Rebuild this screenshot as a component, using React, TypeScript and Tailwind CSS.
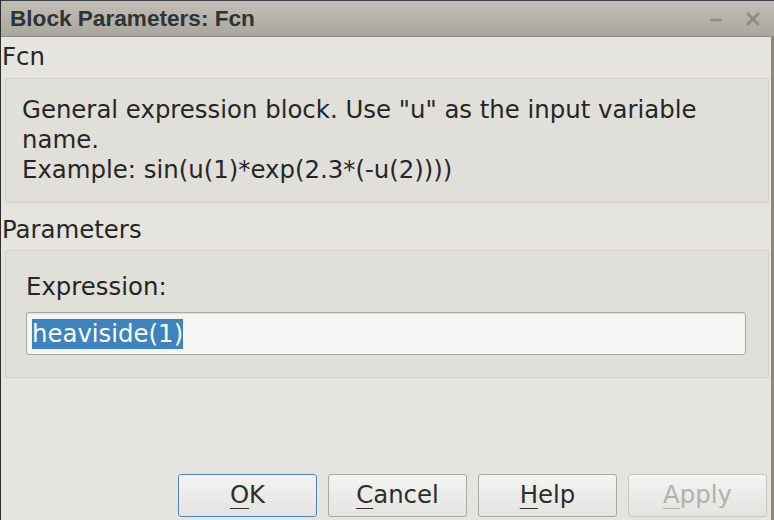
import React from "react";

const body = { fontFamily: '"DejaVu Sans", "Liberation Sans", sans-serif' };

function Btn({ mn, rest, primary, disabled }: { mn: string; rest: string; primary?: boolean; disabled?: boolean }) {
  return (
    <button
      className={
        "h-[43px] w-[139px] rounded-[3px] border bg-gradient-to-b from-[#f4f4f2] to-[#e4e3e0] text-[24.4px] leading-none " +
        (primary ? "border-[#4d86bd] " : disabled ? "border-[#c9c7c2] " : "border-[#aaa8a2] ") +
        (disabled ? "text-[#b3b1ab]" : "text-[#2e2e2e]")
      }
      style={body}
    >
      <span className="underline decoration-1 underline-offset-[5px]">{mn}</span>
      {rest}
    </button>
  );
}

export default function App() {
  return (
    <div className="w-[774px] h-[520px] flex flex-col bg-[#e6e4df] border-l border-[#2b2f34] overflow-hidden" style={body}>
      {/* title bar */}
      <div className="h-[37px] shrink-0 flex items-center justify-between border-t border-[#3a3e44] border-b border-b-[#8e8b84] bg-gradient-to-b from-[#c3bfb8] to-[#a9a69e] pl-[9px] pr-[14px] mr-[-1px]">
        <span className="text-[22.6px] font-bold text-[#2e3436]" style={{ fontFamily: '"Liberation Sans", Arial, sans-serif' }}>
          Block Parameters: Fcn
        </span>
        <div className="flex items-center gap-[22px] text-[#8f8c85]">
          <svg width="14" height="14" viewBox="0 0 14 14"><path d="M1 8h12" stroke="currentColor" strokeWidth="2.5" /></svg>
          <svg width="16" height="16" viewBox="0 0 16 16"><path d="M2 2l12 12M14 2L2 14" stroke="currentColor" strokeWidth="2.8" /></svg>
        </div>
      </div>

      <div className="flex flex-1 min-h-0">
        <div className="flex-1 flex flex-col text-[24.4px] text-[#262626]">
          <div className="pl-[1px] pt-[5px] leading-[30px]">Fcn</div>
          <div className="mt-[6px] ml-[4px] mr-[2px] border border-[#d2cfc9] rounded-[2px] bg-[#e1dfda] pl-[16px] pt-[16px] pb-[17px] leading-[30px]">
            <div>General expression block. Use "u" as the input variable</div>
            <div>name.</div>
            <div>Example: sin(u(1)*exp(2.3*(-u(2))))</div>
          </div>
          <div className="pl-[1px] mt-[12px] leading-[30px]">Parameters</div>
          <div className="mt-[5px] ml-[4px] mr-[2px] border border-[#d2cfc9] rounded-[2px] bg-[#e1dfda] pl-[20px] pr-[22px] pt-[21px] pb-[22px]">
            <div className="leading-[30px]">Expression:</div>
            <div className="mt-[10px] h-[43px] flex items-center rounded-[3px] border border-[#a9a7a2] bg-[#f5f5f5] pl-[5px] shadow-[inset_0_1px_1px_rgba(0,0,0,0.08)]">
              <span className="bg-[#3d83c0] text-white leading-[30px]">heaviside(1)</span>
            </div>
          </div>
          <div className="flex-1" />
          <div className="flex justify-end gap-[11px] pb-[3px] pr-[4px]">
            <Btn mn="O" rest="K" primary />
            <Btn mn="C" rest="ancel" />
            <Btn mn="H" rest="elp" />
            <Btn mn="A" rest="pply" disabled />
          </div>
        </div>
        <div className="w-[3px] shrink-0 bg-[#8a8780]" />
      </div>
    </div>
  );
}
